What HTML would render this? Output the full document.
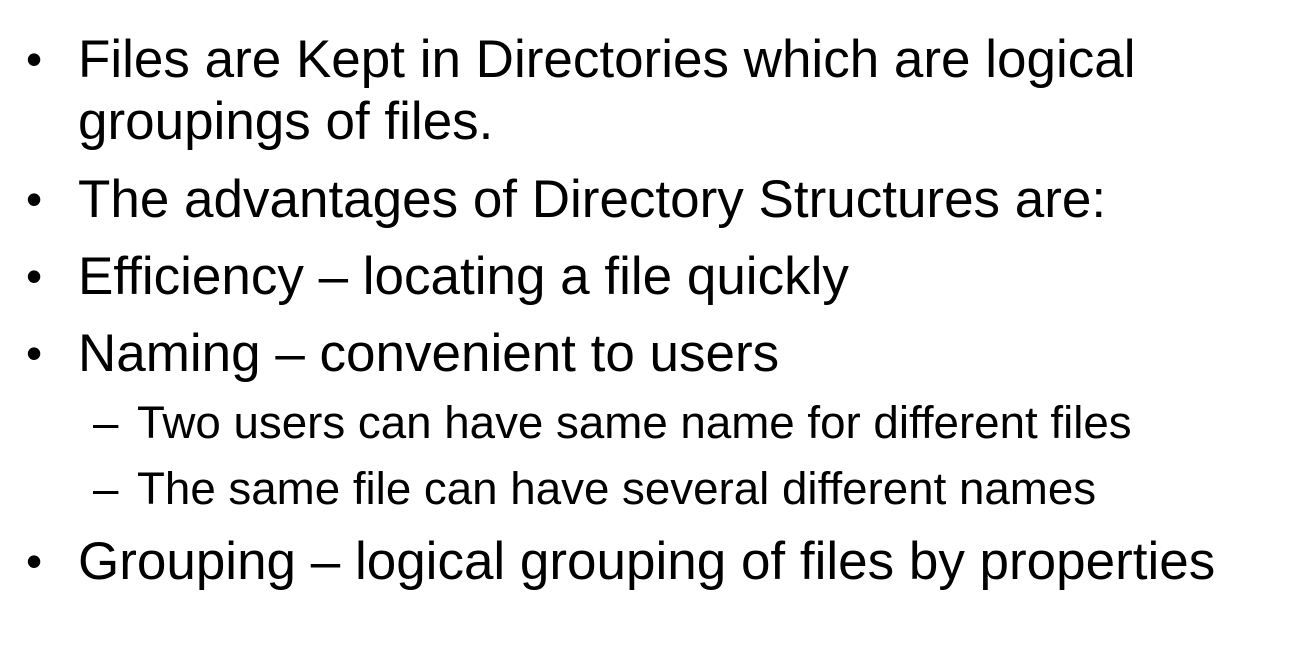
<!DOCTYPE html>
<html><head><meta charset="utf-8"><style>
body{margin:0;width:1289px;height:654px;background:#fff;position:relative;overflow:hidden;font-family:"Liberation Sans",Arial,sans-serif;color:#000}
.l{position:absolute;font-size:53px;line-height:53px;white-space:nowrap}
.b{position:absolute;font-size:46px;line-height:53px}
.s{position:absolute;font-size:45.7px;line-height:45px;white-space:nowrap}
</style></head><body>
<div class="b" style="left:26px;top:33px">•</div>
<div class="l" style="left:78px;top:33px">Files are Kept in Directories which are logical</div>
<div class="l" style="left:78px;top:95px">groupings of files.</div>
<div class="b" style="left:26px;top:173px">•</div>
<div class="l" style="left:78px;top:173px">The advantages of Directory Structures are:</div>
<div class="b" style="left:26px;top:250px">•</div>
<div class="l" style="left:78px;top:250px">Efficiency – locating a file quickly</div>
<div class="b" style="left:26px;top:327px">•</div>
<div class="l" style="left:78px;top:327px">Naming – convenient to users</div>
<div class="s" style="left:93px;top:400px">–</div>
<div class="s" style="left:137px;top:400px">Two users can have same name for different files</div>
<div class="s" style="left:93px;top:466px">–</div>
<div class="s" style="left:137px;top:466px">The same file can have several different names</div>
<div class="b" style="left:26px;top:535px">•</div>
<div class="l" style="left:78px;top:535px">Grouping – logical grouping of files by properties</div>
</body></html>
